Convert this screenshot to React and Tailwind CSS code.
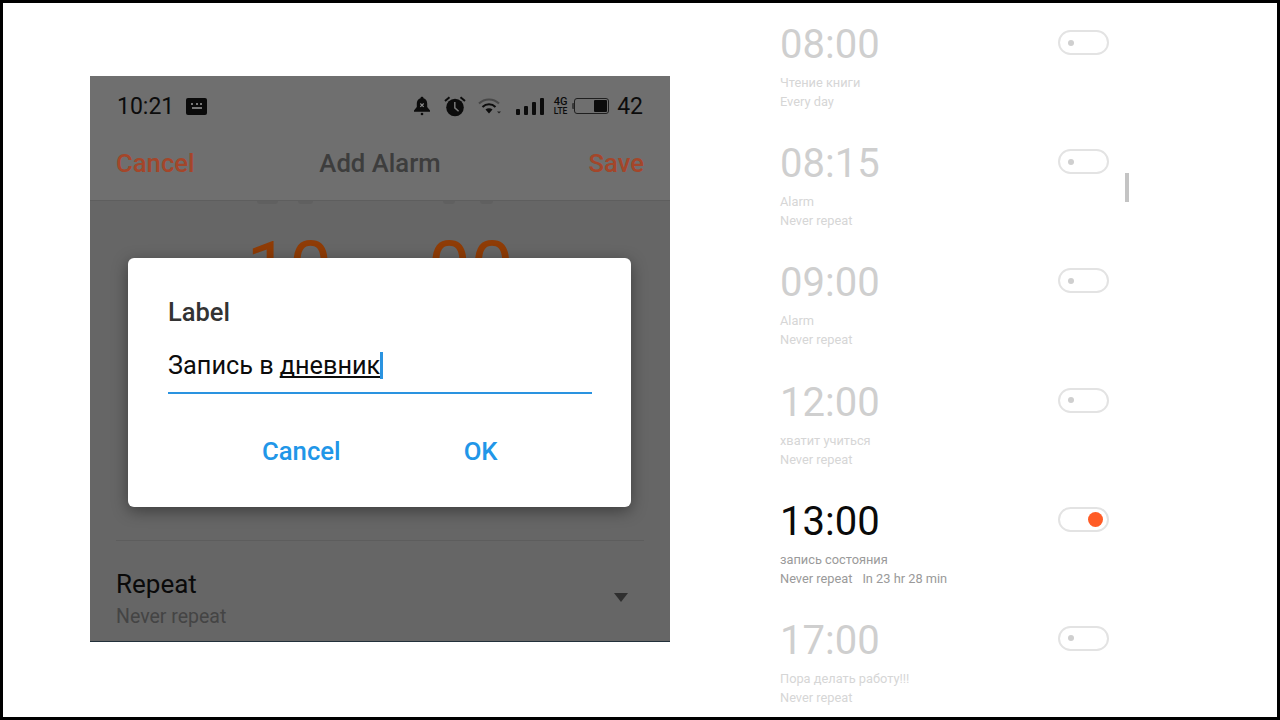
const alarms = [
  { time: "08:00", label: "Чтение книги", repeat: "Every day" },
  { time: "08:15", label: "Alarm", repeat: "Never repeat" },
  { time: "09:00", label: "Alarm", repeat: "Never repeat" },
  { time: "12:00", label: "хватит учиться", repeat: "Never repeat" },
  { time: "13:00", label: "запись состояния", repeat: "Never repeat", extra: "In 23 hr 28 min", on: true },
  { time: "17:00", label: "Пора делать работу!!!", repeat: "Never repeat" },
];

function StatusIcons() {
  return (
    <div className="flex items-center">
      {/* muted bell */}
      <svg width="20" height="20" viewBox="0 0 20 20" className="mr-[12px]">
        <path d="M10 .8c-.9 0-1.500.6-1.500 1.400C6 3 4.800 5 4.800 7.500v3.400L2 14.600v1.200h16v-1.200l-2.800-3.700V7.500c0-2.500-1.200-4.500-3.700-5.300 0-.8-.6-1.400-1.500-1.400z" fill="#0c0c0c" />
        <circle cx="10" cy="18" r="1.300" fill="#0c0c0c" />
        <path d="M8.300 7.500l3.400 3.400M11.700 7.500l-3.400 3.400" stroke="#8a8a8a" strokeWidth="1.200" />
      </svg>
      {/* alarm */}
      <svg width="22" height="21" viewBox="0 0 22 21" className="mr-[12px]">
        <circle cx="11" cy="11.500" r="8.800" fill="#0c0c0c" />
        <path d="M10.800 6v5.800l3.800 3.400" stroke="#777" strokeWidth="1.500" fill="none" />
        <path d="M1 5L5.500 1.200M21 5L16.500 1.200" stroke="#0c0c0c" strokeWidth="2" />
      </svg>
      {/* wifi */}
      <svg width="24" height="18" viewBox="0 0 24 18" className="mr-[14px]">
        <path d="M1 6.500C6.500 1 15.500 1 21 6.500" stroke="#484848" strokeWidth="2" fill="none" />
        <path d="M4.500 10C8.200 6.300 13.800 6.300 17.500 10" stroke="#0c0c0c" strokeWidth="2" fill="none" />
        <path d="M7.500 12.500C9.500 10.800 12.500 10.800 14.500 12.500L11 16.500z" fill="#0c0c0c" />
        <path d="M19 14.500h4l-2 2z" fill="#222" />
      </svg>
      {/* signal */}
      <div className="flex items-end gap-[4px] h-[18px] mr-[9px]">
        <span className="w-[4px] h-[6px] rounded-[1px] bg-[#0c0c0c]" />
        <span className="w-[4px] h-[9px] rounded-[1px] bg-[#0c0c0c]" />
        <span className="w-[4px] h-[13px] rounded-[1px] bg-[#0c0c0c]" />
        <span className="w-[4px] h-[17px] rounded-[1px] bg-[#0c0c0c]" />
      </div>
      <div className="w-[15px] flex flex-col items-center text-[#0c0c0c] font-medium leading-none mr-[4px]">
        <span className="text-[11px] leading-[10px]">4G</span>
        <span className="text-[8.500px] leading-[9px]">LTE</span>
      </div>
      {/* battery */}
      <div className="flex items-center mr-[8px]">
        <span className="w-[2px] h-[6px] bg-[#3a3a3a] rounded-l-[1px]" />
        <div className="w-[35px] h-[16px] border border-[#1f1f1f] rounded-[3px] flex justify-end p-[1px]">
          <span className="w-[13px] h-full bg-[#0c0c0c] rounded-[1px]" />
        </div>
      </div>
      <span className="text-[23px] leading-none text-[#0c0c0c]">42</span>
    </div>
  );
}

function PhoneShot() {
  return (
    <div className="relative w-[580px] h-[566px] mt-[73px] ml-[87px] bg-[#666666] overflow-hidden font-['Roboto',sans-serif] border-b border-[#22303a]">
      <div className="h-[125px] bg-[#6f6f6f] border-b border-[#5e5e5e]">
        <div className="flex items-center justify-between px-[27px] h-[60px]">
          <div className="flex items-center gap-[12px]">
            <span className="text-[23px] leading-none text-[#0c0c0c]">10:21</span>
            <div className="w-[21px] h-[17px] bg-[#0a0a0a] rounded-[2px] flex flex-col items-center justify-center gap-[2px]">
              <span className="w-[11px] border-t-2 border-dotted border-[#777]" />
              <span className="w-[10px] h-[2px] bg-[#777]" />
            </div>
          </div>
          <StatusIcons />
        </div>
        <div className="grid grid-cols-[1fr_auto_1fr] items-center px-[26px] mt-[12px] text-[25.700px] leading-[30px] font-medium">
          <span className="text-[#a4462a]">Cancel</span>
          <span className="text-[#3d3d3d]">Add Alarm</span>
          <span className="text-[#a4462a] text-right">Save</span>
        </div>
      </div>

      {/* tail of the wheel row above the current value */}
      <div className="flex h-[3px] pl-[167px]">
        <span className="w-[21px] h-[3px] rounded-b-full bg-[#606060]" />
        <span className="ml-[20px] w-[15px] h-[3px] rounded-b-full bg-[#606060]" />
        <span className="ml-[130px] w-[12px] h-[3px] rounded-b-full bg-[#606060]" />
        <span className="ml-[25px] w-[13px] h-[3px] rounded-b-full bg-[#606060]" />
      </div>

      {/* picker behind the dialog */}
      <div className="flex justify-center gap-[96px] text-[76px] leading-none text-[#8f3c06] mt-[27px] h-[309px]">
        <span>10</span>
        <span>00</span>
      </div>

      <div className="mx-[26px] border-t border-[#5d5d5d] pt-[28px] relative">
        <div className="text-[26px] leading-[30px] text-[#0a0a0a]">Repeat</div>
        <div className="mt-[3px] text-[19.500px] leading-[30px] text-[#444444]">Never repeat</div>
        <span className="absolute right-[16px] top-[52px] w-0 h-0 border-x-[7px] border-x-transparent border-t-[9px] border-t-[#2f2f2f]" />
      </div>

      {/* dialog */}
      <div className="absolute left-[38px] top-[182px] w-[503px] h-[249px] bg-white rounded-[6px] shadow-[0_4px_16px_rgba(0,0,0,0.4)] pl-[40px] pr-[39px] pt-[39px]">
        <div className="text-[25.500px] leading-[30px] font-medium text-[#333333]">Label</div>
        <div className="mt-[24px] h-[43px] border-b-2 border-[#2a93e0] text-[25.300px] leading-[30px] text-[#0c0c0c] flex items-start">
          <span>Запись в</span>
          <span className="ml-[6px] underline decoration-2 underline-offset-2 [text-decoration-skip-ink:none]">дневник</span>
          <span className="w-[3px] h-[27px] bg-[#2a93e0] mt-[1px]" />
        </div>
        <div className="flex mt-[42px] text-[25.700px] leading-[30px] font-medium text-[#2196e8]">
          <span className="ml-[94px]">Cancel</span>
          <span className="ml-[123px]">OK</span>
        </div>
      </div>
    </div>
  );
}

function AlarmRow({ alarm }) {
  return (
    <div className="flex justify-between h-[119.200px]">
      <div className="font-['Roboto',sans-serif]">
        <div className={`text-[40px] leading-[48px] ${alarm.on ? "text-[#0a0a0a]" : "text-[#cfcfcf]"}`}>{alarm.time}</div>
        <div className={`mt-[4px] text-[12.800px] leading-[19px] ${alarm.on ? "text-[#9a9a9a]" : "text-[#d6d6d6]"}`}>
          <div>{alarm.label}</div>
          <div>
            {alarm.repeat}
            {alarm.extra && <span className="ml-[10px]">{alarm.extra}</span>}
          </div>
        </div>
      </div>
      <div className={`mt-[9px] w-[51px] h-[25px] rounded-full border-2 border-[#e3e3e3] flex items-center ${alarm.on ? "justify-end pr-[4px]" : "pl-[8px]"}`}>
        {alarm.on ? (
          <span className="w-[15px] h-[15px] rounded-full bg-[#ff5c26]" />
        ) : (
          <span className="w-[6px] h-[6px] rounded-full bg-[#cfcfcf]" />
        )}
      </div>
    </div>
  );
}

export default function App() {
  return (
    <div className="w-[1280px] h-[720px] bg-white border-[3px] border-black flex overflow-hidden">
      <PhoneShot />
      <div className="relative ml-[110px] w-[329px] pt-[18px]">
        {alarms.map((a) => (
          <AlarmRow key={a.time} alarm={a} />
        ))}
        <span className="absolute right-[-20px] top-[170px] w-[4px] h-[29px] bg-[#c4c4c4]" />
      </div>
    </div>
  );
}
